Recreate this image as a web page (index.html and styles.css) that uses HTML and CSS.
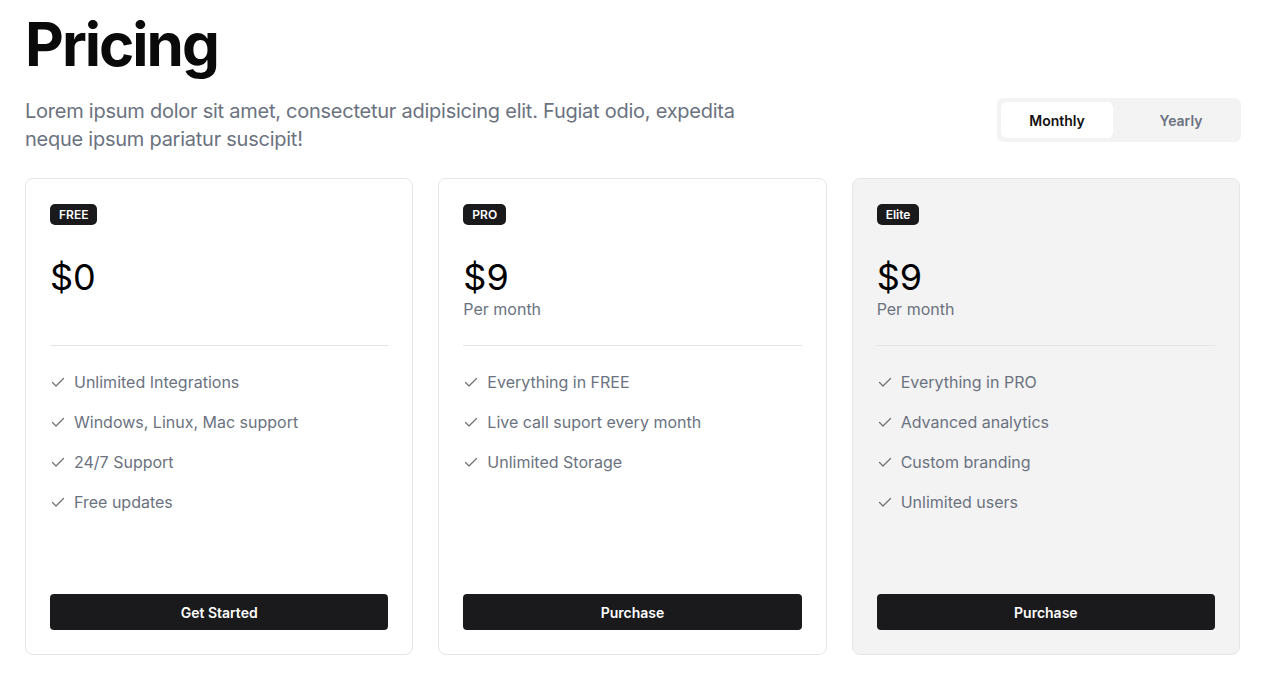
FILE: index.html
```html
<!DOCTYPE html>
<html lang="en">
<head>
<meta charset="utf-8">
<title>Pricing</title>
<link rel="stylesheet" href="styles.css">
</head>
<body>
<main class="page">
  <h1 class="title">Pricing</h1>
  <div class="intro">
    <p class="lead">Lorem ipsum dolor sit amet, consectetur adipisicing elit. Fugiat odio, expedita neque ipsum pariatur suscipit!</p>
    <div class="toggle">
      <button class="toggle-btn active">Monthly</button>
      <button class="toggle-btn">Yearly</button>
    </div>
  </div>
  <section class="plans">
    <article class="card">
      <span class="badge">FREE</span>
      <div class="price-block">
        <div class="price">$0</div>
      </div>
      <hr class="divider">
      <ul class="features">
        <li><svg class="check" viewBox="0 0 16 16"><path d="M2.5 8.5l3.5 3.5 7.5-7.5"/></svg>Unlimited Integrations</li>
        <li><svg class="check" viewBox="0 0 16 16"><path d="M2.5 8.5l3.5 3.5 7.5-7.5"/></svg>Windows, Linux, Mac support</li>
        <li><svg class="check" viewBox="0 0 16 16"><path d="M2.5 8.5l3.5 3.5 7.5-7.5"/></svg>24/7 Support</li>
        <li><svg class="check" viewBox="0 0 16 16"><path d="M2.5 8.5l3.5 3.5 7.5-7.5"/></svg>Free updates</li>
      </ul>
      <button class="cta">Get Started</button>
    </article>
    <article class="card">
      <span class="badge">PRO</span>
      <div class="price-block">
        <div class="price">$9</div>
        <div class="period">Per month</div>
      </div>
      <hr class="divider">
      <ul class="features">
        <li><svg class="check" viewBox="0 0 16 16"><path d="M2.5 8.5l3.5 3.5 7.5-7.5"/></svg>Everything in FREE</li>
        <li><svg class="check" viewBox="0 0 16 16"><path d="M2.5 8.5l3.5 3.5 7.5-7.5"/></svg>Live call suport every month</li>
        <li><svg class="check" viewBox="0 0 16 16"><path d="M2.5 8.5l3.5 3.5 7.5-7.5"/></svg>Unlimited Storage</li>
      </ul>
      <button class="cta">Purchase</button>
    </article>
    <article class="card card-muted">
      <span class="badge">Elite</span>
      <div class="price-block">
        <div class="price">$9</div>
        <div class="period">Per month</div>
      </div>
      <hr class="divider">
      <ul class="features">
        <li><svg class="check" viewBox="0 0 16 16"><path d="M2.5 8.5l3.5 3.5 7.5-7.5"/></svg>Everything in PRO</li>
        <li><svg class="check" viewBox="0 0 16 16"><path d="M2.5 8.5l3.5 3.5 7.5-7.5"/></svg>Advanced analytics</li>
        <li><svg class="check" viewBox="0 0 16 16"><path d="M2.5 8.5l3.5 3.5 7.5-7.5"/></svg>Custom branding</li>
        <li><svg class="check" viewBox="0 0 16 16"><path d="M2.5 8.5l3.5 3.5 7.5-7.5"/></svg>Unlimited users</li>
      </ul>
      <button class="cta">Purchase</button>
    </article>
  </section>
</main>
</body>
</html>
```
FILE: styles.css
```css
* { box-sizing: border-box; }
html, body { margin: 0; padding: 0; background: #fff; }
body {
  font-family: Inter, "Noto Sans", "Liberation Sans", sans-serif;
  color: #0a0a0a;
}
.page {
  padding: 14px 25px 22px;
}
.title {
  margin: 0;
  font-size: 60px;
  line-height: 60px;
  font-weight: 700;
  letter-spacing: -2px;
  color: #0a0a0b;
}
.intro {
  display: flex;
  justify-content: space-between;
  align-items: flex-start;
  margin-top: 23px;
}
.lead {
  margin: 0;
  max-width: 740px;
  font-size: 20px;
  line-height: 28px;
  letter-spacing: -0.25px;
  color: #6b7280;
}
.toggle {
  display: flex;
  gap: 12px;
  padding: 4px;
  margin-top: 1px;
  margin-right: -1px;
  background: #f3f3f3;
  border-radius: 6px;
}
.toggle-btn {
  border: 0;
  background: transparent;
  font-family: inherit;
  font-size: 14px;
  font-weight: 600;
  color: #6b7280;
  height: 36px;
  width: 112px;
  border-radius: 6px;
  cursor: pointer;
}
.toggle-btn.active {
  background: #fff;
  color: #111;
}
.plans {
  display: grid;
  grid-template-columns: repeat(3, 1fr);
  gap: 25px;
  margin-top: 25px;
}
.card {
  display: flex;
  flex-direction: column;
  align-items: flex-start;
  min-height: 477px;
  padding: 25px 24px 24px;
  border: 1px solid #e5e5e5;
  border-radius: 8px;
  background: #fff;
}
.card-muted { background: #f3f3f3; }
.badge {
  display: inline-block;
  height: 21px;
  line-height: 21px;
  padding: 0 9px;
  border-radius: 5px;
  background: #1a1a1c;
  color: #fff;
  font-size: 12px;
  font-weight: 600;
}
.price-block {
  margin-top: 32px;
  min-height: 64px;
}
.price {
  font-size: 36px;
  line-height: 40px;
  font-weight: 400;
  color: #000;
}
.period {
  font-size: 16px;
  line-height: 24px;
  color: #6b7280;
}
.divider {
  width: 100%;
  margin: 24px 0 0;
  border: 0;
  border-top: 1px solid #e5e5e5;
}
.features {
  list-style: none;
  margin: 24px 0 0;
  padding: 0;
  display: flex;
  flex-direction: column;
  gap: 16px;
  flex: 1;
}
.features li {
  display: flex;
  align-items: center;
  gap: 8px;
  font-size: 16px;
  line-height: 24px;
  color: #6b7280;
}
.check {
  width: 16px;
  height: 16px;
  fill: none;
  stroke: #707070;
  stroke-width: 1.2;
  stroke-linecap: round;
  stroke-linejoin: round;
}
.cta {
  width: 100%;
  height: 36px;
  border: 0;
  border-radius: 4px;
  background: #1a1a1c;
  color: #fff;
  font-family: inherit;
  font-size: 14px;
  font-weight: 600;
  cursor: pointer;
}
```
